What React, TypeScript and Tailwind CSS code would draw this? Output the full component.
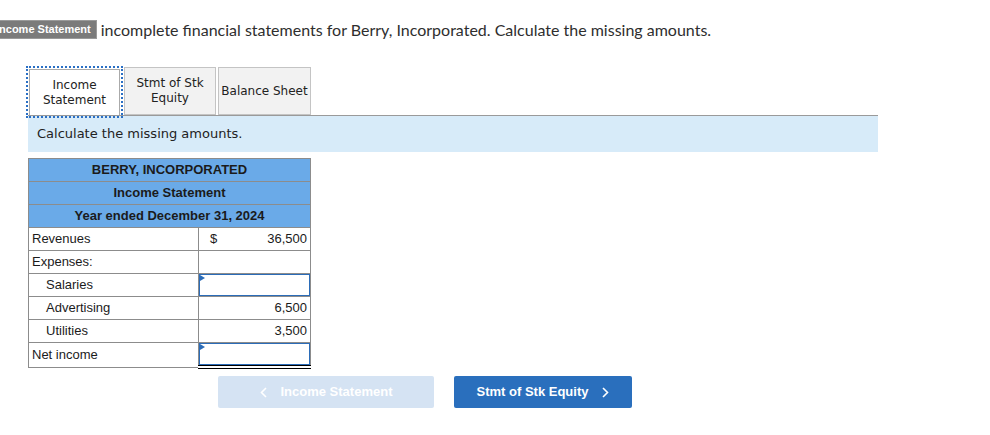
import React from "react";

const rows: { label: string; indent?: boolean; dollar?: boolean; value?: string; input?: boolean; total?: boolean }[] = [
  { label: "Revenues", dollar: true, value: "36,500" },
  { label: "Expenses:" },
  { label: "Salaries", indent: true, input: true },
  { label: "Advertising", indent: true, value: "6,500" },
  { label: "Utilities", indent: true, value: "3,500" },
  { label: "Net income", input: true, total: true },
];

function InputCell() {
  return (
    <div className="relative h-[22px] border border-[#2b6cb8] bg-white">
      <span className="absolute left-0 top-0 h-0 w-0 border-y-[3px] border-l-[5px] border-y-transparent border-l-[#2b6cb8]" />
    </div>
  );
}

function Chevron({ dir }: { dir: "left" | "right" }) {
  return (
    <svg width="7" height="11" viewBox="0 0 7 11" fill="none" stroke="currentColor" strokeWidth="1.6">
      {dir === "left" ? <path d="M6 1 L1.5 5.5 L6 10" /> : <path d="M1 1 L5.5 5.5 L1 10" />}
    </svg>
  );
}

export default function App() {
  return (
    <div className="w-[990px] h-[435px] bg-white overflow-hidden">
      {/* Question line */}
      <div className="flex items-center pt-[19px] h-[40px]">
        <span className="-ml-[10px] bg-[#7b7b7b] border border-[#9a9a9a] px-[5px] h-[19px] flex items-center text-[11px] font-bold text-white font-['Liberation_Sans',Arial,sans-serif]">
          Income Statement
        </span>
        <span className="ml-[4px] text-[16px] text-[#2e2e2e] font-['Lato',sans-serif]">
          incomplete financial statements for Berry, Incorporated. Calculate the missing amounts.
        </span>
      </div>

      <div className="ml-[28px] mt-[27px] w-[850px] font-['DejaVu_Sans',Verdana,sans-serif]">
        {/* Tabs */}
        <div className="flex items-end gap-[2px] text-[12px] leading-[15px] text-[#222]">
          <div className="outline-2 outline-dotted outline-[#2a6fc4] p-[1px] -mb-[1px]">
            <div className="w-[91px] h-[46px] border border-[#aaa] border-b-0 bg-white flex items-center justify-center text-center">
              Income<br />Statement
            </div>
          </div>
          <div className="ml-[1px] w-[92px] h-[48px] border border-[#c4c4c4] bg-[#f2f2f2] flex items-center justify-center text-center">
            Stmt of Stk<br />Equity
          </div>
          <div className="w-[93px] h-[48px] border border-[#c4c4c4] bg-[#f2f2f2] flex items-center justify-center text-center">
            Balance Sheet
          </div>
        </div>
        <div className="border-t border-[#9a9a9a] bg-[#d7ebf9] h-[37px] flex items-center pl-[9px] text-[13px] text-[#222]">
          Calculate the missing amounts.
        </div>

        {/* Statement table */}
        <table className="mt-[6px] w-[283px] border-collapse font-['Liberation_Sans',Arial,sans-serif] text-[13px] text-[#1b1b1b]">
          <tbody>
            {["BERRY, INCORPORATED", "Income Statement", "Year ended December 31, 2024"].map((t) => (
              <tr key={t}>
                <td colSpan={2} className="h-[23px] border border-[#8c8c8c] bg-[#6aaae8] text-center font-bold p-0">
                  {t}
                </td>
              </tr>
            ))}
            {rows.map((r) => (
              <tr key={r.label}>
                <td className={`h-[23px] w-[170px] border border-[#8c8c8c] p-0 ${r.indent ? "pl-[17px]" : "pl-[3px]"}`}>
                  {r.label}
                </td>
                <td className={`border border-[#8c8c8c] p-0 ${r.total ? "border-b-[4px] border-b-black border-double" : ""}`}>
                  {r.input ? (
                    <InputCell />
                  ) : (
                    <div className="flex justify-between pl-[11px] pr-[3px]">
                      <span>{r.dollar ? "$" : ""}</span>
                      <span>{r.value ?? ""}</span>
                    </div>
                  )}
                </td>
              </tr>
            ))}
          </tbody>
        </table>

        {/* Navigation buttons */}
        <div className="mt-[7px] ml-[190px] flex gap-[20px] font-['Liberation_Sans',Arial,sans-serif] text-[13px] font-bold text-white">
          <button className="w-[216px] h-[32px] rounded-[2px] bg-[#d5e3f3] flex items-center justify-center gap-[14px]">
            <Chevron dir="left" />
            <span>Income Statement</span>
          </button>
          <button className="w-[178px] h-[32px] rounded-[2px] bg-[#2a6fbd] flex items-center justify-center gap-[14px]">
            <span>Stmt of Stk Equity</span>
            <Chevron dir="right" />
          </button>
        </div>
      </div>
    </div>
  );
}
